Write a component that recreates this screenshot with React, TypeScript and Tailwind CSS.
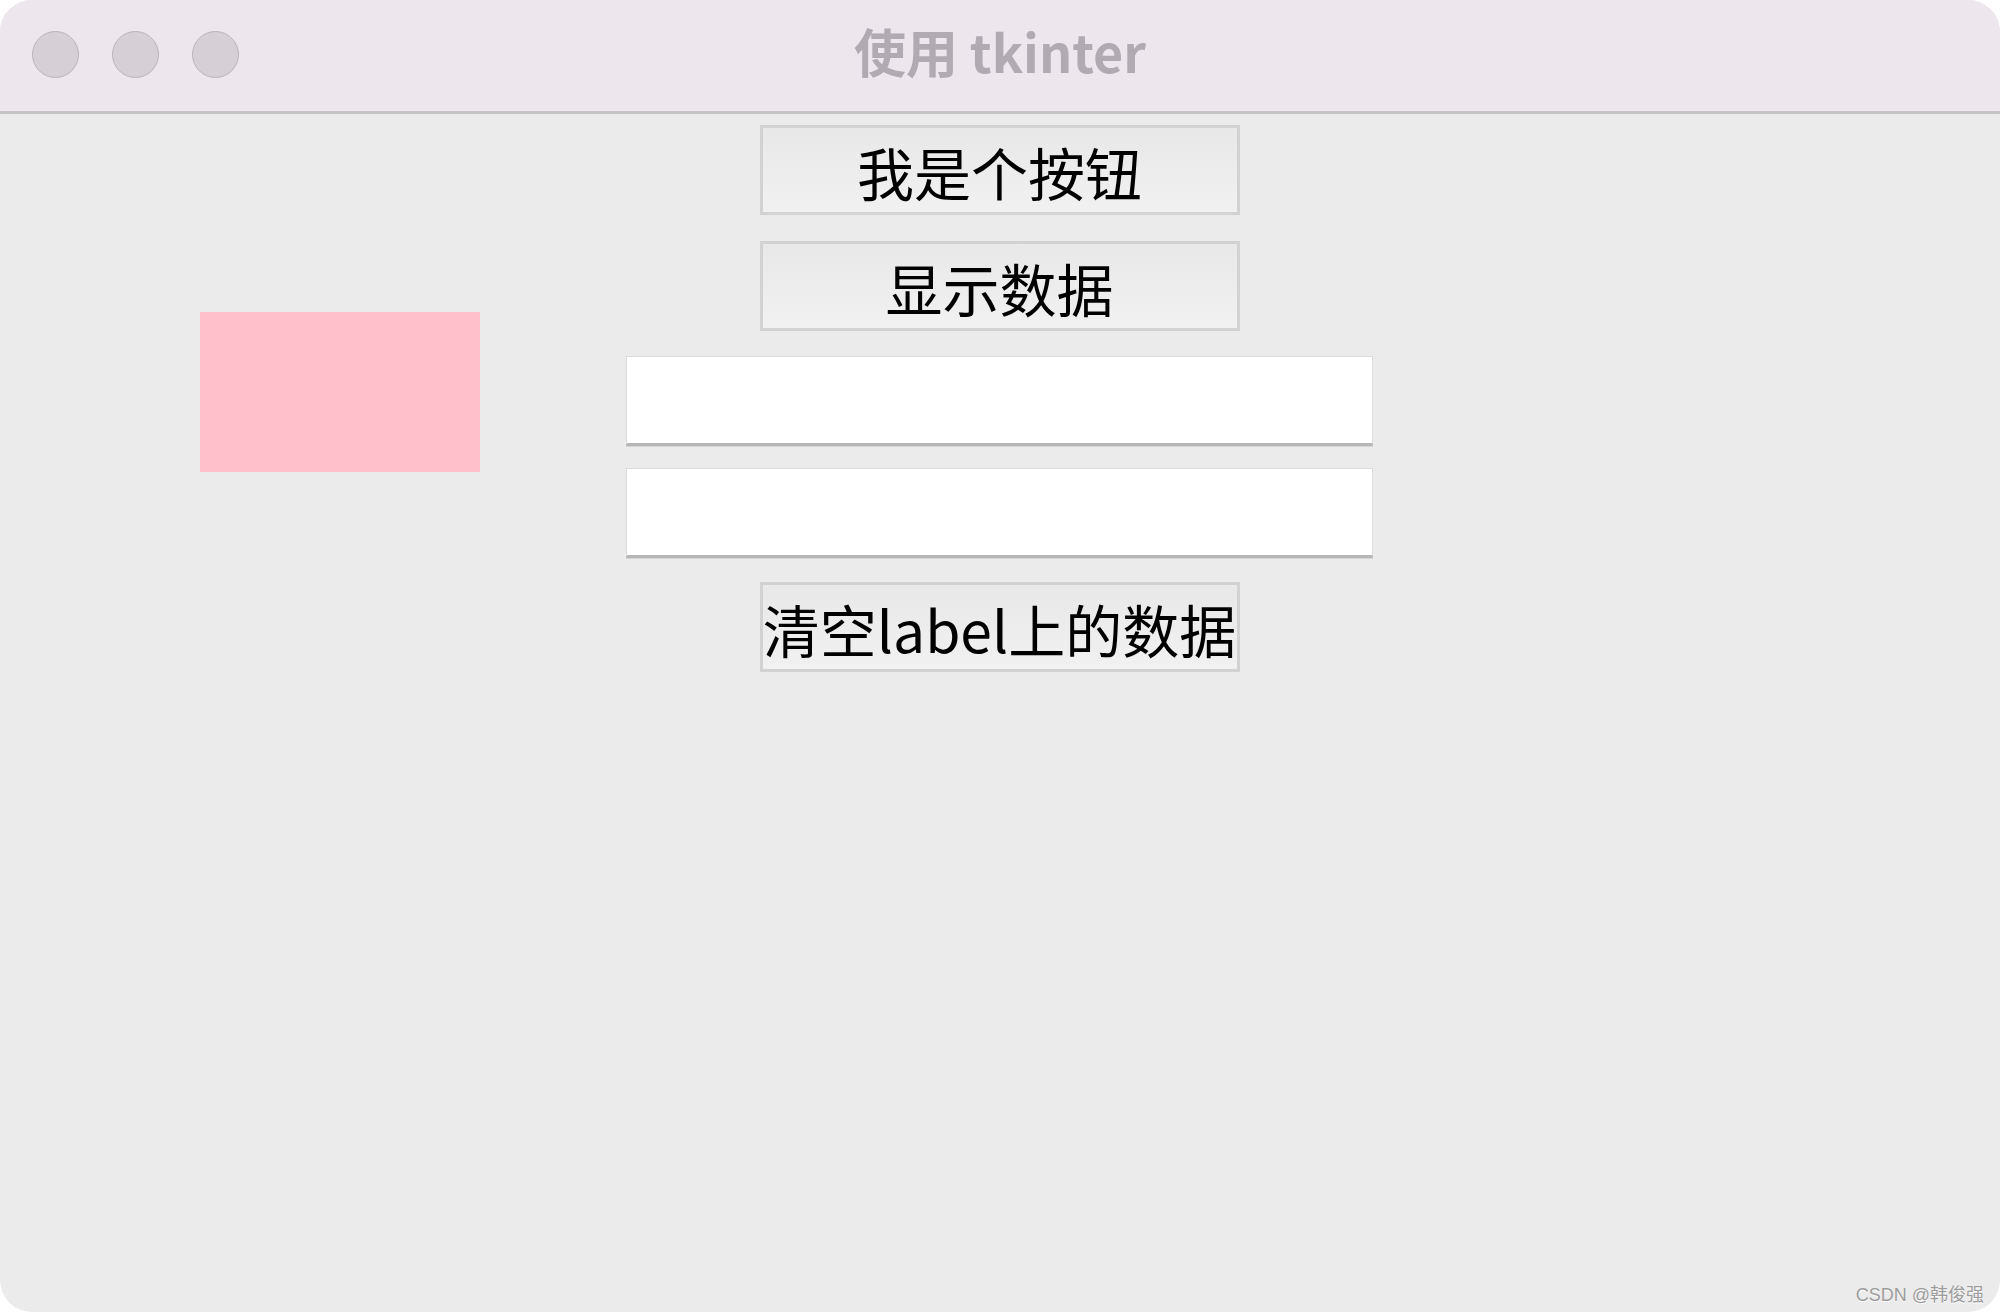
import React from "react";

const cjk = { fontFamily: '"Noto Sans CJK SC", "Noto Sans", sans-serif' };

function TkButton({ children }: { children: React.ReactNode }) {
  return (
    <div
      className="flex h-[90px] w-[480px] items-center justify-center overflow-visible whitespace-nowrap border-[3px] border-[#d2d2d2] bg-gradient-to-b from-[#e8e8e8] to-[#f1f1f1] text-[57px] leading-none text-black"
      style={cjk}
    >
      <span className="mt-[3px]">{children}</span>
    </div>
  );
}

function TkEntry() {
  return (
    <div className="h-[90px] w-[747px] border border-[#dcdcdc] border-b-[3px] border-b-[#b6b6b6] bg-white shadow-[0_1px_0_#d6d6d6]" />
  );
}

function Light() {
  return <div className="h-[47px] w-[47px] rounded-full border-[1.5px] border-[#bbb3bb] bg-[#d6cfd6]" />;
}

export default function App() {
  return (
    <div className="h-[1312px] w-[2000px] bg-white">
      <div className="flex h-full w-full flex-col overflow-hidden rounded-[32px] bg-[#ebebeb]">
        <div className="relative flex h-[114px] shrink-0 items-center border-b-[3px] border-[#c6c3c6] bg-[#ede6ed]">
          <div className="flex gap-[33px] pl-[32px] pb-[2px]">
            <Light />
            <Light />
            <Light />
          </div>
          <div
            className="absolute inset-x-0 top-[25px] text-center text-[52px] font-bold leading-none text-[#b1aab2]"
            style={cjk}
          >
            使用 tkinter
          </div>
        </div>
        <div className="relative flex flex-1">
          <div className="w-[626px] shrink-0 pl-[200px] pt-[198px]">
            <div className="h-[160px] w-[280px] bg-[#ffc0cb]" />
          </div>
          <div className="flex w-[747px] flex-col items-center pt-[11px]">
            <TkButton>我是个按钮</TkButton>
            <div className="h-[26px]" />
            <TkButton>显示数据</TkButton>
            <div className="h-[25px]" />
            <TkEntry />
            <div className="h-[22px]" />
            <TkEntry />
            <div className="h-[24px]" />
            <TkButton>清空label上的数据</TkButton>
          </div>
          <div className="flex flex-1 flex-col items-end justify-end pb-[8px] pr-[16px]">
            <span
              className="text-[18px] leading-none text-[#9c9c9c] [text-shadow:0_1px_0_#ffffff]"
              style={{ fontFamily: '"Liberation Sans", "Noto Sans CJK SC", sans-serif' }}
            >
              CSDN @韩俊强
            </span>
          </div>
        </div>
      </div>
    </div>
  );
}
